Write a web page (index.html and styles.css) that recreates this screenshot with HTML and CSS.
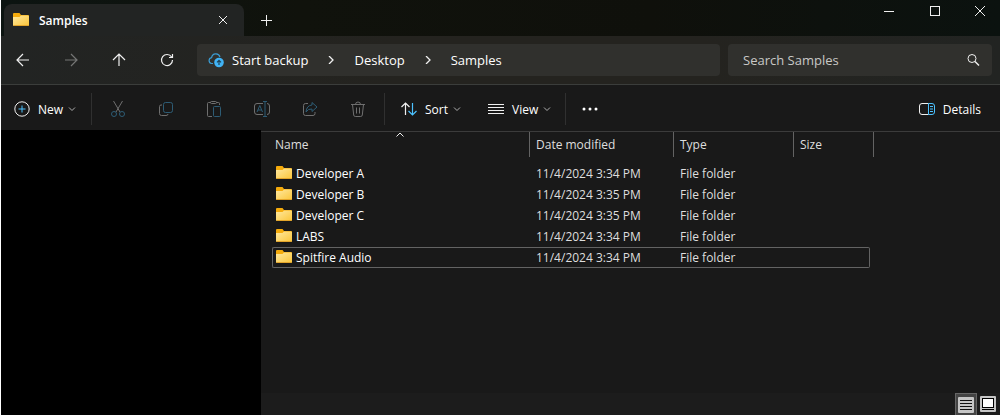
FILE: index.html
```html
<!DOCTYPE html>
<html lang="en">
<head>
  <meta charset="UTF-8" />
  <meta name="viewport" content="width=device-width, initial-scale=1" />
  <title>Samples</title>
  <link rel="stylesheet" href="styles.css">
</head>
<body>

  <!-- Shared icons -->
  <svg class="sprite" aria-hidden="true">
    <defs>
      <linearGradient id="folderFill" x1="0" y1="0" x2="1" y2="1">
        <stop offset="0" stop-color="#ffe9a0" />
        <stop offset="1" stop-color="#fbc538" />
      </linearGradient>
      <symbol id="folder" viewBox="0 0 16 16">
        <path d="M0 2Q0 1 1 1H6.500L8 3H15Q16 3 16 4V8H0Z" fill="#f5ab0c" />
        <path d="M0 5H6.500L8 3.500H15Q16 3.500 16 4.500V13Q16 14 15 14H1Q0 14 0 13Z" fill="url(#folderFill)" />
        <path d="M.5 13.5H15.5" stroke="#e3a52a" />
      </symbol>
      <symbol id="chevron-down" viewBox="0 0 8 8">
        <path d="M1 2.5L4 5.5L7 2.5" />
      </symbol>
      <symbol id="chevron-right" viewBox="0 0 8 8">
        <path d="M2 0L6 4L2 8" stroke-width="1.3" />
      </symbol>
    </defs>
  </svg>

  <div class="window">
    <header class="titlebar">
      <div class="tab">
        <svg class="icon"><use href="#folder" /></svg>
        <span class="tab-title">Samples</span>
        <button class="tab-close" aria-label="Close tab">
          <svg class="icon line" viewBox="0 0 16 16"><path d="M4 4L12 12M12 4L4 12" /></svg>
        </button>
      </div>
      <button class="new-tab" aria-label="New tab">
        <svg class="icon line" viewBox="0 0 16 16"><path d="M8.5 3V14M3 8.5H14" /></svg>
      </button>
      <div class="window-controls">
        <button aria-label="Minimize">
          <svg class="icon line" viewBox="0 0 16 16"><path d="M3 8.5H13" /></svg>
        </button>
        <button aria-label="Maximize">
          <svg class="icon line" viewBox="0 0 16 16"><rect x="3.5" y="3.5" width="9" height="9" /></svg>
        </button>
        <button aria-label="Close">
          <svg class="icon line" viewBox="0 0 16 16"><path d="M3 3L13 13M13 3L3 13" /></svg>
        </button>
      </div>
    </header>

    <nav class="navbar">
      <button class="nav-button" aria-label="Back">
        <svg class="icon line" viewBox="0 0 16 16"><path d="M14 8H2M8 2L2 8L8 14" stroke-width="1.2" /></svg>
      </button>
      <button class="nav-button" aria-label="Forward" disabled>
        <svg class="icon line" viewBox="0 0 16 16"><path d="M2 8H14M8 2L14 8L8 14" stroke-width="1.2" /></svg>
      </button>
      <button class="nav-button" aria-label="Up">
        <svg class="icon line" viewBox="0 0 16 16"><path d="M8 14V2M2 8L8 2L14 8" stroke-width="1.2" /></svg>
      </button>
      <button class="nav-button" aria-label="Refresh">
        <svg class="icon line" viewBox="0 0 16 16"><path d="M13.500 8A5.500 5.500 0 1 1 12.600 5M13.500 2V5.500H10" stroke-width="1.2" /></svg>
      </button>
      <div class="address">
        <svg class="icon backup" viewBox="0 0 16 16">
          <path d="M5 11.5H3.5A3 3 0 0 1 3.6 5.6A4.3 4.3 0 0 1 12 5" fill="none" stroke="#3a9ad0" stroke-width="1.2" />
          <circle cx="11" cy="10.5" r="4.8" fill="#41b3f5" />
          <path d="M11 13V8.5M9 10.3L11 8.3L13 10.3" fill="none" stroke="#1d4257" stroke-width="1.2" />
        </svg>
        <a href="#">Start backup</a>
        <svg class="crumb-arrow line"><use href="#chevron-right" /></svg>
        <a href="#">Desktop</a>
        <svg class="crumb-arrow line"><use href="#chevron-right" /></svg>
        <a href="#">Samples</a>
      </div>
      <div class="search">
        <input type="text" placeholder="Search Samples" aria-label="Search Samples">
        <svg class="icon line" viewBox="0 0 16 16"><circle cx="7" cy="6.5" r="4" /><path d="M10 9.5L14 13.5" stroke-width="1.5" /></svg>
      </div>
    </nav>

    <div class="toolbar">
      <button class="tool new">
        <svg class="icon line" viewBox="0 0 16 16"><circle cx="8" cy="8" r="7.2" /><path class="accent" d="M8 4.5V11.5M4.5 8H11.5" /></svg>
        <span>New</span>
        <svg class="chevron line"><use href="#chevron-down" /></svg>
      </button>
      <div class="separator"></div>
      <div class="actions">
        <button aria-label="Cut" disabled>
          <svg class="icon line" viewBox="0 0 16 16"><path d="M3.5 0L10 11M12.5 0L6 11" /><g class="accent"><circle cx="4" cy="13" r="2.5" /><circle cx="12" cy="13" r="2.5" /></g></svg>
        </button>
        <button aria-label="Copy" disabled>
          <svg class="icon line" viewBox="0 0 16 16"><path d="M4 4H3Q1.5 4 1.5 5.5V12.5Q1.5 14.5 3.5 14.5H8Q10 14.5 10 13" /><rect class="accent" x="5.5" y="1.5" width="9" height="10" rx="2" /></svg>
        </button>
        <button aria-label="Paste" disabled>
          <svg class="icon line" viewBox="0 0 16 16"><path d="M4.5 1.5H2.5Q1.5 1.5 1.5 2.5V14.5Q1.5 15.5 2.5 15.5H6M10.5 1.5H12.5Q13.5 1.5 13.5 2.5V4" /><rect x="4.5" y=".5" width="6" height="2" rx="1" /><rect class="accent" x="7.5" y="5.5" width="7" height="10" rx="1" /></svg>
        </button>
        <button aria-label="Rename" disabled>
          <svg class="icon line" viewBox="0 0 16 16"><path d="M9 2.5H3Q.5 2.5 .5 5V11Q.5 13.5 3 13.5H9M13 2.5Q15.5 2.5 15.5 5V11Q15.5 13.5 13 13.5" /><path class="accent" d="M3 11L5.8 4.5L8.5 11M4 9H7.7M11 .5V15.5M9 .5H13M9 15.5H13" /></svg>
        </button>
        <button aria-label="Share" disabled>
          <svg class="icon line" viewBox="0 0 16 16"><path d="M6 2.5H3.5Q1.5 2.5 1.5 4.5V12.5Q1.5 14.5 3.5 14.5H11Q13 14.5 13 12.5V11" /><path class="accent" d="M10 1.5L15 6L10 10.5V8Q6 7.5 4 11Q4.5 4.5 10 4Z" /></svg>
        </button>
        <button aria-label="Delete" disabled>
          <svg class="icon line" viewBox="0 0 16 16"><path d="M1 3.5H15M5.5 3.5Q5.5 1 8 1Q10.5 1 10.5 3.5M2.5 3.5L3.7 14Q3.9 15.5 5.3 15.5H10.7Q12.1 15.5 12.3 14L13.5 3.5M6.5 6.5V12.5M9.5 6.5V12.5" /></svg>
        </button>
      </div>
      <div class="separator"></div>
      <button class="tool sort">
        <svg class="icon line" viewBox="0 0 16 16"><path d="M4.5 14V2M.5 6L4.5 2L8.5 6" stroke-width="1.2" /><path class="accent" d="M11.5 2V14M7.5 10L11.5 14L15.5 10" stroke-width="1.2" /></svg>
        <span>Sort</span>
        <svg class="chevron line"><use href="#chevron-down" /></svg>
      </button>
      <button class="tool view">
        <svg class="icon line" viewBox="0 0 16 16"><path d="M0 3.5H16M0 6.5H16M0 9.5H16M0 12.5H16" /></svg>
        <span>View</span>
        <svg class="chevron line"><use href="#chevron-down" /></svg>
      </button>
      <div class="separator"></div>
      <button class="more" aria-label="See more">
        <svg class="icon" viewBox="0 0 16 16" fill="#fff"><circle cx="2" cy="8" r="1.5" /><circle cx="8" cy="8" r="1.5" /><circle cx="14" cy="8" r="1.5" /></svg>
      </button>
      <button class="tool details">
        <svg class="icon line" viewBox="0 0 16 16"><path d="M9.5 2.5H3Q.5 2.5 .5 5V11Q.5 13.5 3 13.5H9.5" /><path class="accent" d="M9.5 2.5H13Q15.5 2.5 15.5 5V11Q15.5 13.5 13 13.5H9.5ZM11 5.5H14M11 8H14M11 10.5H14" /></svg>
        <span>Details</span>
      </button>
    </div>

    <div class="content">
      <aside class="sidebar"></aside>
      <main class="files">
        <table>
          <colgroup>
            <col class="col-name"><col class="col-date"><col class="col-type"><col class="col-size"><col class="col-end">
          </colgroup>
          <thead>
            <tr>
              <th class="sorted">Name
                <svg class="sort-arrow line" viewBox="0 0 8 8"><path d="M.5 5.5L4 2L7.5 5.5" /></svg>
              </th>
              <th>Date modified</th>
              <th>Type</th>
              <th colspan="2">Size</th>
            </tr>
          </thead>
          <tbody>
            <tr>
              <td class="name"><svg class="icon"><use href="#folder" /></svg>Developer A</td>
              <td>11/4/2024 3:34 PM</td><td>File folder</td><td></td>
            </tr>
            <tr>
              <td class="name"><svg class="icon"><use href="#folder" /></svg>Developer B</td>
              <td>11/4/2024 3:35 PM</td><td>File folder</td><td></td>
            </tr>
            <tr>
              <td class="name"><svg class="icon"><use href="#folder" /></svg>Developer C</td>
              <td>11/4/2024 3:35 PM</td><td>File folder</td><td></td>
            </tr>
            <tr>
              <td class="name"><svg class="icon"><use href="#folder" /></svg>LABS</td>
              <td>11/4/2024 3:34 PM</td><td>File folder</td><td></td>
            </tr>
            <tr class="focused">
              <td class="name"><svg class="icon"><use href="#folder" /></svg>Spitfire Audio</td>
              <td>11/4/2024 3:34 PM</td><td>File folder</td><td></td>
            </tr>
          </tbody>
        </table>
        <footer class="statusbar">
          <button class="layout active" aria-label="Details view">
            <svg class="icon" viewBox="0 0 16 16"><rect width="16" height="16" rx="1" fill="#c6c6c6" /><path d="M2 3.5H14M2 6.5H14M2 9.5H14M2 12.5H14" stroke="#111" /></svg>
          </button>
          <button class="layout" aria-label="Large icons view">
            <svg class="icon" viewBox="0 0 16 16"><rect width="16" height="16" rx="1" fill="#c6c6c6" /><rect x="2.5" y="2.5" width="11" height="9" fill="#fff" stroke="#000" /><path d="M2 13.5H14" stroke="#000" /></svg>
          </button>
        </footer>
      </main>
    </div>
  </div>

</body>
</html>
```
FILE: styles.css
```css
* {
  box-sizing: border-box;
}

body {
  margin: 0;
  font-family: "Open Sans", "Noto Sans", sans-serif;
  font-size: 12px;
  color: #fff;
  background-color: #191919;
}

button {
  display: flex;
  align-items: center;
  justify-content: center;
  padding: 0;
  border: none;
  background: none;
  color: inherit;
  font: inherit;
}

a {
  color: inherit;
  text-decoration: none;
}

.sprite {
  position: absolute;
  width: 0;
  height: 0;
}

.icon {
  display: block;
  flex: none;
  width: 16px;
  height: 16px;
}

.line {
  fill: none;
  stroke: #f0f0f0;
}

.accent {
  stroke: #4cc2ff;
}

button:disabled .icon {
  opacity: 0.4;
}

.window {
  display: flex;
  flex-direction: column;
  min-height: 100vh;
  border-left: 1px solid #fff;
}

/* Title bar */
.titlebar {
  display: flex;
  height: 36px;
  padding-left: 3px;
  background: linear-gradient(90deg, #0c1411, #10120c 30%, #0f100b 65%, #0b120f);
}

.tab {
  display: flex;
  align-items: center;
  width: 240px;
  margin-top: 4px;
  padding: 0 13px 0 9px;
  border-radius: 8px 8px 0 0;
  background-color: #222423;
}

.tab-title {
  flex: 1;
  margin-left: 10px;
  font-weight: 600;
}

.new-tab {
  width: 44px;
  padding-top: 4px;
}

.window-controls {
  display: flex;
  height: 22px;
  margin-left: auto;
}

.window-controls button {
  width: 46px;
}

.window-controls button:last-child {
  width: 40px;
  margin-left: 2px;
}

/* Navigation */
.navbar {
  display: flex;
  align-items: center;
  height: 49px;
  padding-right: 8px;
  border-bottom: 1px solid #3b3d3b;
  background: linear-gradient(90deg, #222423, #24231f 40%, #24231f 70%, #222422);
}

.nav-button {
  width: 44px;
  height: 32px;
  margin-right: 4px;
}

.address,
.search {
  display: flex;
  align-items: center;
  height: 32px;
  border-radius: 4px;
  background-color: #30302d;
  font-size: 13px;
}

.address {
  flex: 1;
  margin: 0 8px 0 4px;
  padding-left: 11px;
}

.backup {
  margin-right: 8px;
}

.crumb-arrow {
  width: 8px;
  height: 8px;
  margin: 0 19px;
}

.search {
  width: 264px;
  padding: 0 11px 0 15px;
}

.search input {
  flex: 1;
  min-width: 0;
  padding: 0;
  border: none;
  outline: none;
  background: none;
  color: #fff;
  font: inherit;
}

.search input::placeholder {
  color: #c8c8c6;
}

/* Toolbar */
.toolbar {
  display: flex;
  align-items: center;
  height: 45px;
  padding: 3px 19px 0 12px;
}

.tool {
  gap: 8px;
  height: 32px;
}

.chevron {
  width: 8px;
  height: 8px;
  margin-left: -3px;
  opacity: 0.7;
}

.new {
  width: 64px;
}

.separator {
  width: 1px;
  height: 32px;
  margin-left: 14px;
  background-color: #303030;
}

.actions {
  display: flex;
  margin-left: 2px;
}

.actions button {
  width: 48px;
  height: 32px;
}

.actions + .separator {
  margin-left: 2px;
}

.sort {
  margin-left: 16px;
}

.view {
  margin-left: 27px;
}

.more {
  margin-left: 16px;
}

.details {
  margin-left: auto;
}

/* File list */
.content {
  display: flex;
  flex: 1;
}

.sidebar {
  width: 260px;
  background-color: #000;
}

.files {
  display: flex;
  flex: 1;
  flex-direction: column;
  margin-top: 1px;
  border-top: 1px solid #3b3b3b;
}

table {
  width: 602px;
  margin-left: 11px;
  border-spacing: 0;
  table-layout: fixed;
}

.col-name {
  width: 258px;
}

.col-date {
  width: 144px;
}

.col-type {
  width: 120px;
}

.col-size {
  width: 76px;
}

.col-end {
  width: 4px;
}

th {
  position: relative;
  height: 25px;
  padding: 0 6px;
  border-right: 1px solid #636363;
  color: #dedede;
  font-weight: normal;
  text-align: left;
}

th.sorted {
  padding-left: 3px;
}

.sort-arrow {
  position: absolute;
  top: -1px;
  left: calc(50% - 5px);
  width: 8px;
  height: 8px;
}

tbody::before {
  content: "";
  display: block;
  height: 6px;
}

td {
  height: 21px;
  padding: 0 6px;
  border: 0 solid #636363;
  color: #dedede;
  line-height: 18px;
}

td.name {
  padding-left: 4px;
  color: #fff;
}

.name .icon {
  float: left;
  margin-right: 4px;
}

.focused td {
  border-width: 1px 0;
}

.focused td:first-child {
  padding-left: 3px;
  border-left-width: 1px;
  border-radius: 2px 0 0 2px;
}

.focused td:last-child {
  border-right-width: 1px;
  border-radius: 0 2px 2px 0;
}

.statusbar {
  display: flex;
  justify-content: flex-end;
  height: 22px;
  margin-top: auto;
  padding-right: 1px;
  background-color: #1c1c1c;
}

.layout {
  width: 22px;
  height: 22px;
}

.layout.active {
  border: 1px solid #666;
  border-bottom: none;
  background-color: #444;
}
```
